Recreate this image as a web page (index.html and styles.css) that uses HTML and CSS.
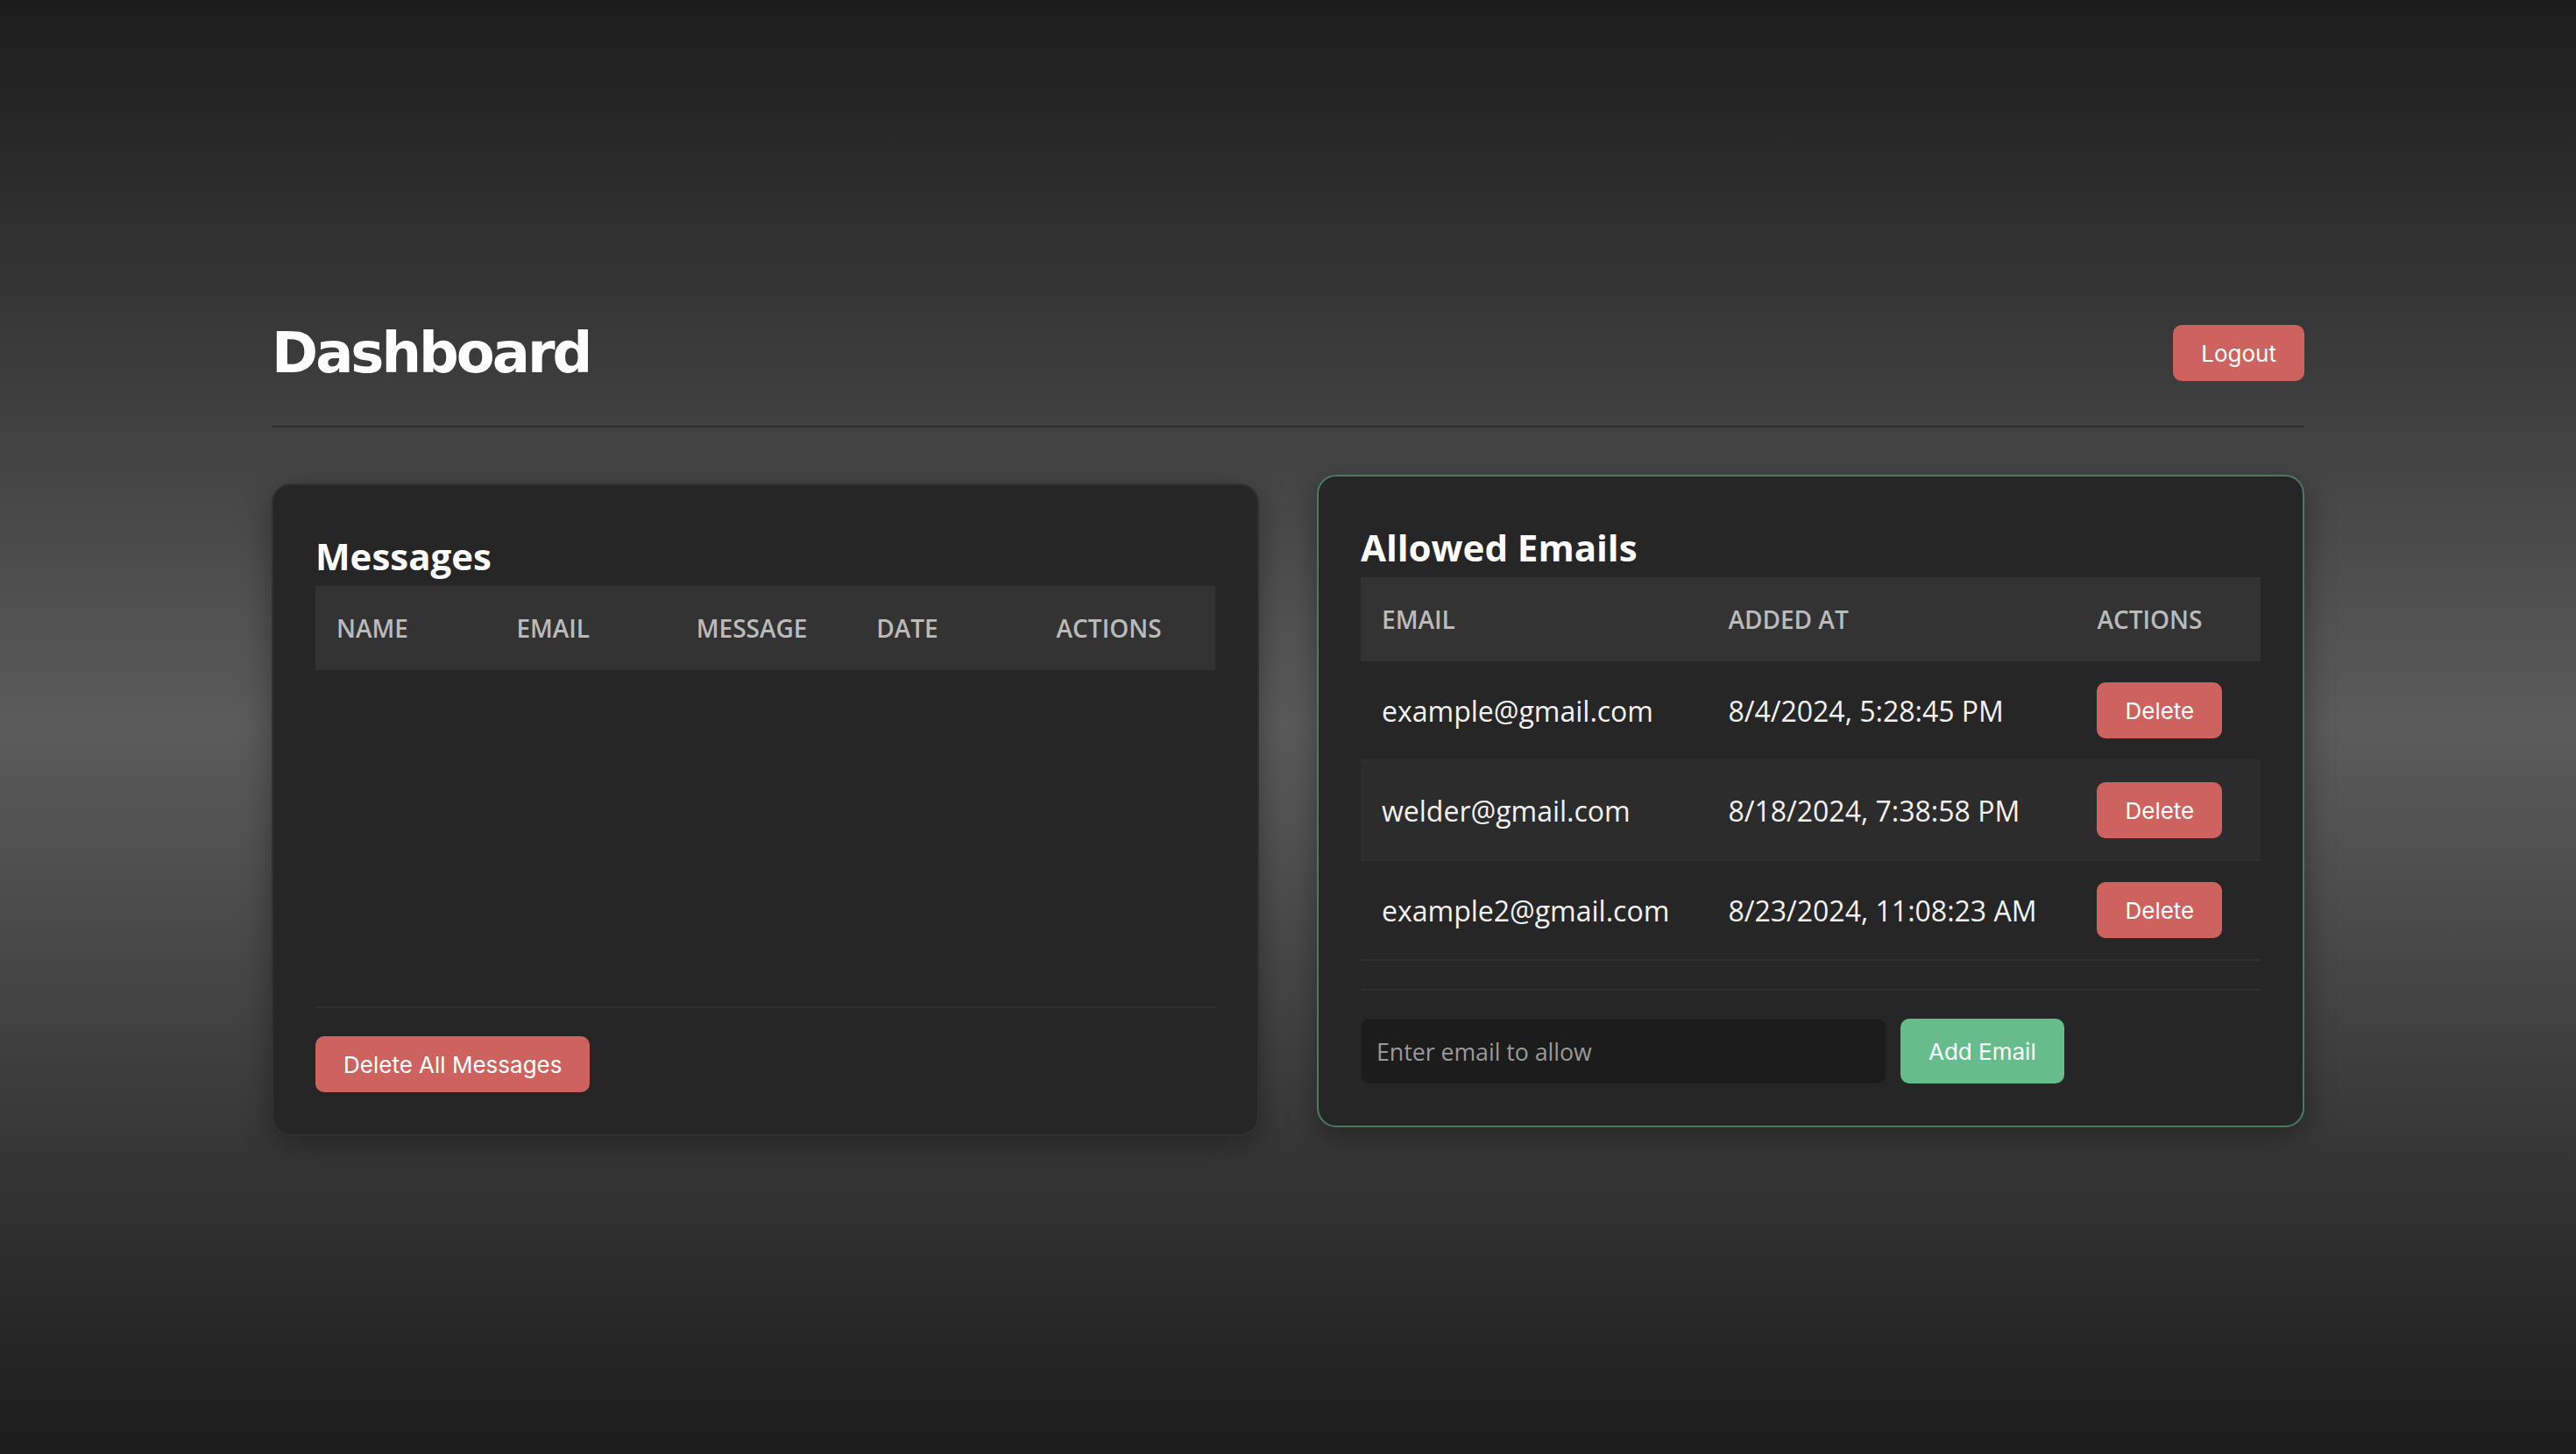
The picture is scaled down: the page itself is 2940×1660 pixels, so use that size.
FILE: index.html
```html
<!DOCTYPE html>
<html lang="en">
<head>
<meta charset="utf-8">
<title>Dashboard</title>
<link rel="stylesheet" href="styles.css">
</head>
<body>
<div class="container">
  <header class="header">
    <h1 class="title">Dashboard</h1>
    <button class="btn btn-danger">Logout</button>
  </header>
  <main class="grid">
    <section class="card">
      <h2 class="card-title">Messages</h2>
      <table class="table table-fixed">
        <thead>
          <tr><th>Name</th><th>Email</th><th>Message</th><th>Date</th><th>Actions</th></tr>
        </thead>
        <tbody></tbody>
      </table>
      <div class="card-footer">
        <button class="btn btn-danger">Delete All Messages</button>
      </div>
    </section>
    <section class="card card-active">
      <h2 class="card-title">Allowed Emails</h2>
      <table class="table">
        <thead>
          <tr><th class="col-email">Email</th><th class="col-date">Added At</th><th class="col-actions">Actions</th></tr>
        </thead>
        <tbody>
          <tr><td>example@gmail.com</td><td>8/4/2024, 5:28:45 PM</td><td><button class="btn btn-danger">Delete</button></td></tr>
          <tr><td>welder@gmail.com</td><td>8/18/2024, 7:38:58 PM</td><td><button class="btn btn-danger">Delete</button></td></tr>
          <tr><td>example2@gmail.com</td><td>8/23/2024, 11:08:23 AM</td><td><button class="btn btn-danger">Delete</button></td></tr>
        </tbody>
      </table>
      <div class="card-footer card-footer-spaced">
        <input class="input" type="email" placeholder="Enter email to allow">
        <button class="btn btn-success">Add Email</button>
      </div>
    </section>
  </main>
</div>
</body>
</html>
```

FILE: styles.css
```css
* { box-sizing: border-box; }

html, body { height: 100%; }

body {
  margin: 0;
  padding-top: 3px;
  min-height: 1660px;
  display: flex;
  align-items: center;
  justify-content: center;
  background: linear-gradient(to bottom, #1c1c1c 0%, #5b5b5b 50%, #1c1c1c 100%);
  font-family: "Open Sans", "Noto Sans", sans-serif;
  color: #eeeeee;
}

.container {
  width: 2320px;
}

.header {
  display: flex;
  justify-content: space-between;
  align-items: center;
  padding-bottom: 46px;
  border-bottom: 2px solid #2e2e2e;
}

.title {
  margin: 0;
  font-family: "DejaVu Sans", sans-serif;
  font-weight: 700;
  font-size: 64px;
  line-height: 74px;
  letter-spacing: -3px;
  color: #ffffff;
}

.btn {
  border: none;
  border-radius: 10px;
  height: 64px;
  padding: 0 32px;
  font-family: Inter, "Liberation Sans", sans-serif;
  font-size: 26px;
  color: #ffffff;
  cursor: pointer;
}

.btn-danger { background: #cd625f; }
.btn-success { background: #66bd8b; height: 74px; }

.grid {
  display: grid;
  grid-template-columns: 1fr 1fr;
  gap: 66px;
  margin-top: 64px;
}

.card {
  display: flex;
  flex-direction: column;
  background: #262626;
  border: 2px solid #313131;
  border-radius: 22px;
  padding: 48px;
  box-shadow: 0 10px 34px rgba(0, 0, 0, 0.35);
}

.card-active {
  border-color: #4a7b61;
  transform: translateY(-10px);
}

.card-title {
  margin: 4px 0 6px;
  font-size: 42px;
  line-height: 57px;
  font-weight: 700;
  color: #ffffff;
}

.table {
  width: 100%;
  border-collapse: collapse;
}

.table-fixed { table-layout: fixed; }

.table th {
  background: #333333;
  color: #bbbbbb;
  font-size: 28px;
  font-weight: 600;
  line-height: 48px;
  text-transform: uppercase;
  text-align: left;
  padding: 24px;
}

.table .col-email { width: 38.5%; }
.table .col-date { width: 41%; }
.table .col-actions { width: 20.5%; }

.table td {
  padding: 24px;
  font-size: 32px;
  color: #f2f2f2;
  vertical-align: middle;
  white-space: nowrap;
}

.table tbody tr { border-bottom: 2px solid #2e2e2e; }
.table tbody tr:nth-child(even) { background: #2c2c2c; }

.card-footer {
  margin-top: auto;
  border-top: 2px solid #303030;
  padding-top: 32px;
  display: flex;
  gap: 16px;
}

.card-footer-spaced { margin-top: 32px; }

.input {
  width: 600px;
  height: 74px;
  background: #1c1c1c;
  border: 2px solid #1e1e1e;
  border-radius: 10px;
  padding: 0 16px;
  font-family: "Open Sans", sans-serif;
  font-size: 26.67px;
  color: #eeeeee;
  outline: none;
}

.input::placeholder { color: #9a9a9a; }
```
